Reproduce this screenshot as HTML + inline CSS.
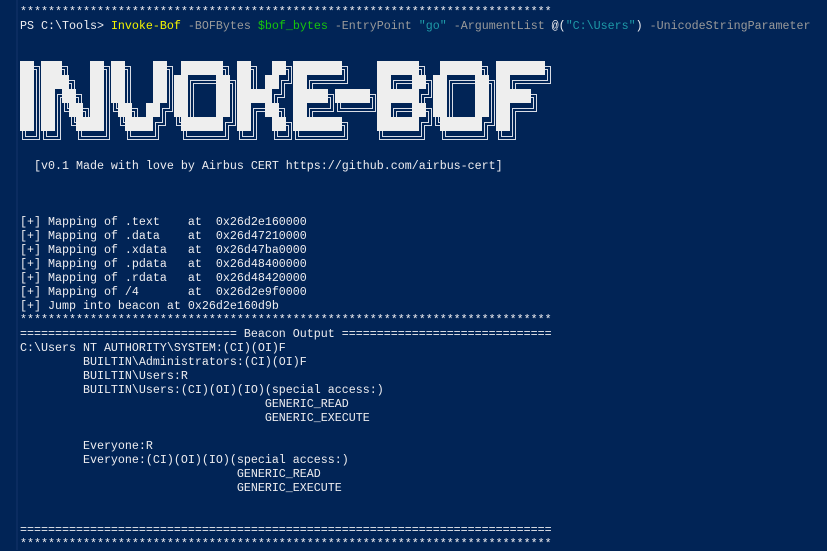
<!DOCTYPE html>
<html><head><meta charset="utf-8">
<style>
html,body{margin:0;padding:0;}
body{width:827px;height:550px;background:#012456;overflow:hidden;position:relative;}
.edge{position:absolute;left:16px;top:0;width:2px;height:550px;background:#0b2c60;}
pre{margin:0;position:absolute;left:20px;top:5px;font-family:"Liberation Mono",monospace;font-size:11.67px;line-height:14px;color:#eeedf0;white-space:pre;}
.y{color:#f4f400}.g{color:#9a9a9a}.gr{color:#16c60c}.c{color:#1e9aa8}
svg{position:absolute;left:0;top:0;}
</style></head><body>
<div class="edge"></div>
<pre>****************************************************************************
PS C:\Tools&gt; <span class="y">Invoke-Bof</span> <span class="g">-BOFBytes</span> <span class="gr">$bof_bytes</span> <span class="g">-EntryPoint</span> <span class="c">"go"</span> <span class="g">-ArgumentList</span> @(<span class="c">"C:\Users"</span>) <span class="g">-UnicodeStringParameter</span>









  [v0.1 Made with love by Airbus CERT https://github.com/airbus-cert]



[+] Mapping of .text    at  0x26d2e160000
[+] Mapping of .data    at  0x26d47210000
[+] Mapping of .xdata   at  0x26d47ba0000
[+] Mapping of .pdata   at  0x26d48400000
[+] Mapping of .rdata   at  0x26d48420000
[+] Mapping of /4       at  0x26d2e9f0000
[+] Jump into beacon at 0x26d2e160d9b
****************************************************************************
=============================== Beacon Output ==============================
C:\Users NT AUTHORITY\SYSTEM:(CI)(OI)F
         BUILTIN\Administrators:(CI)(OI)F
         BUILTIN\Users:R
         BUILTIN\Users:(CI)(OI)(IO)(special access:)
                                   GENERIC_READ
                                   GENERIC_EXECUTE

         Everyone:R
         Everyone:(CI)(OI)(IO)(special access:)
                               GENERIC_READ
                               GENERIC_EXECUTE


============================================================================
****************************************************************************</pre>
<svg id="b" width="827" height="150" viewBox="0 0 827 150"></svg>
<script>
var rows=[
"██╗███╗   ██╗██╗   ██╗ ██████╗ ██╗  ██╗███████╗    ██████╗  ██████╗ ███████╗",
"██║████╗  ██║██║   ██║██╔═══██╗██║ ██╔╝██╔════╝    ██╔══██╗██╔═══██╗██╔════╝",
"██║██╔██╗ ██║██║   ██║██║   ██║█████╔╝ █████╗█████╗██████╔╝██║   ██║█████╗  ",
"██║██║╚██╗██║╚██╗ ██╔╝██║   ██║██╔═██╗ ██╔══╝╚════╝██╔══██╗██║   ██║██╔══╝  ",
"██║██║ ╚████║ ╚████╔╝ ╚██████╔╝██║  ██╗███████╗    ██████╔╝╚██████╔╝██║     ",
"╚═╝╚═╝  ╚═══╝  ╚═══╝   ╚═════╝ ╚═╝  ╚═╝╚══════╝    ╚═════╝  ╚═════╝ ╚═╝     "];
var s='',L=20,T=61,W=7,H=14,a=2,b=5,ya=5,yb=8;
function ln(p){s+='<polyline points="'+p+'" fill="none" stroke="#d9dde6" stroke-width="1"/>';}
for(var r=0;r<rows.length;r++){var row=Array.from(rows[r]);
 for(var c=0;c<row.length;c++){var ch=row[c],x=L+c*W,y=T+r*H;
  if(ch==='█'){s+='<rect x="'+x+'" y="'+y+'" width="7" height="14" fill="#eeeeee"/>';continue;}
  var X=function(d){return x+d+0.5},Y=function(d){return y+d+0.5};
  if(ch==='═'){ln(x+','+Y(ya)+' '+(x+7)+','+Y(ya));ln(x+','+Y(yb)+' '+(x+7)+','+Y(yb));}
  else if(ch==='║'){ln(X(a)+','+y+' '+X(a)+','+(y+14));ln(X(b)+','+y+' '+X(b)+','+(y+14));}
  else if(ch==='╗'){ln(x+','+Y(ya)+' '+X(b)+','+Y(ya)+' '+X(b)+','+(y+14));ln(x+','+Y(yb)+' '+X(a)+','+Y(yb)+' '+X(a)+','+(y+14));}
  else if(ch==='╔'){ln((x+7)+','+Y(ya)+' '+X(a)+','+Y(ya)+' '+X(a)+','+(y+14));ln((x+7)+','+Y(yb)+' '+X(b)+','+Y(yb)+' '+X(b)+','+(y+14));}
  else if(ch==='╝'){ln(X(b)+','+y+' '+X(b)+','+Y(yb)+' '+x+','+Y(yb));ln(X(a)+','+y+' '+X(a)+','+Y(ya)+' '+x+','+Y(ya));}
  else if(ch==='╚'){ln(X(a)+','+y+' '+X(a)+','+Y(yb)+' '+(x+7)+','+Y(yb));ln(X(b)+','+y+' '+X(b)+','+Y(ya)+' '+(x+7)+','+Y(ya));}
 }}
document.getElementById('b').innerHTML=s;
</script>
</body></html>
